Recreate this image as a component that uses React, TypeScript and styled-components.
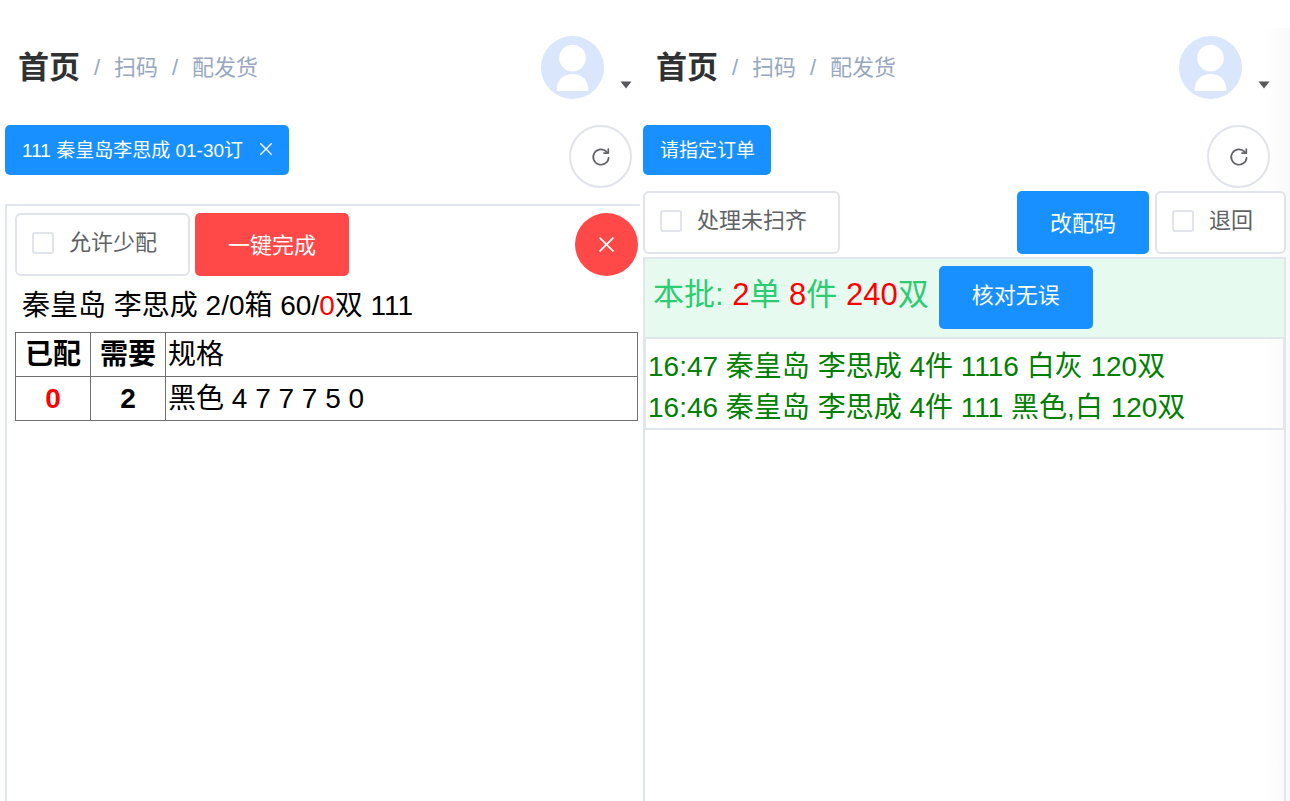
import React from "react";
import styled, { createGlobalStyle } from "styled-components";

const line = "#e1e6ed";
const controlLine = "#e2e4eb";
const blue = "#1890ff";
const red = "#ff4949";

const GlobalStyle = createGlobalStyle`
  * { box-sizing: border-box; }
  body {
    margin: 0;
    background: #fff;
    color: #000;
    font-family: "Liberation Sans", "Noto Sans CJK SC", sans-serif;
  }
  button { font: inherit; margin: 0; padding: 0; cursor: pointer; }
`;

const Page = styled.div`
  display: grid;
  grid-template-columns: 640fr 650fr;
  min-height: 100vh;
  padding-top: 28px;
  overflow: hidden;
`;

const Pane = styled.main<{ $shaded?: boolean }>`
  display: flex;
  flex-direction: column;
  min-width: 0;
  padding-left: ${(p) => (p.$shaded ? 3 : 5)}px;
  padding-right: ${(p) => (p.$shaded ? 4 : 0)}px;
  background: ${(p) =>
    p.$shaded
      ? "linear-gradient(to left, #f9f9f9, #ffffff 24px)"
      : "#fff"};
`;

const Header = styled.header<{ $end: number }>`
  display: flex;
  align-items: center;
  justify-content: space-between;
  height: 78px;
  padding: 0 ${(p) => p.$end}px 0 13px;
`;

const Crumbs = styled.nav`
  display: flex;
  align-items: center;
  padding-top: 2px;
  color: #97a8be;
  font-size: 22px;
  line-height: 32px;
`;

const Home = styled.a`
  color: #303133;
  font-size: 31px;
  font-weight: 700;
  text-decoration: none;
`;

const Crumb = styled.a`
  color: inherit;
  text-decoration: none;
`;

const Slash = styled.span`
  width: 34px;
  text-align: center;
`;

const UserMenu = styled.button`
  display: flex;
  align-items: flex-end;
  gap: 16px;
  border: 0;
  background: none;

  svg { display: block; }
  svg:last-child { margin-bottom: 10px; }
`;

const TabBar = styled.div<{ $end: number; $height: number }>`
  display: flex;
  align-items: flex-start;
  justify-content: space-between;
  height: ${(p) => p.$height}px;
  margin-top: 19px;
  padding-right: ${(p) => p.$end}px;
`;

const Tab = styled.div`
  display: flex;
  align-items: center;
  gap: 16px;
  height: 50px;
  padding: 0 16px 3px 17px;
  border-radius: 5px;
  background: ${blue};
  color: #fff;
  font-size: 19px;
  white-space: nowrap;
`;

const TabClose = styled.button`
  display: flex;
  border: 0;
  background: none;
  color: #fff;
`;

const RoundButton = styled.button<{ $danger?: boolean }>`
  display: flex;
  align-items: center;
  justify-content: center;
  width: 63px;
  height: 63px;
  border: ${(p) => (p.$danger ? "0" : `2px solid ${controlLine}`)};
  border-radius: 50%;
  background: ${(p) => (p.$danger ? red : "#fff")};
  color: ${(p) => (p.$danger ? "#fff" : "#606266")};
`;

const Actions = styled.div`
  display: flex;
  align-items: flex-start;
  gap: 5px;
`;

const Spacer = styled.div`
  flex: 1;
`;

const Button = styled.button<{ $danger?: boolean }>`
  height: 63px;
  padding: 0 33px 4px;
  border: 0;
  border-radius: 5px;
  background: ${(p) => (p.$danger ? red : blue)};
  color: #fff;
  font-size: 22px;
  white-space: nowrap;
`;

const CheckLabel = styled.label`
  display: flex;
  align-items: center;
  gap: 15px;
  height: 63px;
  padding: 0 31px 3px 15px;
  border: 2px solid ${controlLine};
  border-radius: 6px;
  background: #fff;
  color: #606266;
  font-size: 22px;
  line-height: 28px;
  white-space: nowrap;
`;

const CheckBox = styled.input`
  appearance: none;
  width: 22px;
  height: 22px;
  margin: 0;
  border: 2px solid ${controlLine};
  border-radius: 3px;
  background: #fff;

  &:checked { background: ${blue}; }
`;

const OrderPanel = styled.section`
  flex: 1;
  padding: 7px 2px 0 8px;
  border: solid ${line};
  border-width: 2px 0 0 2px;
`;

const OrderTitle = styled.p`
  margin: 10px 0 6px;
  padding-left: 7px;
  font-size: 28px;
  line-height: 40px;
`;

const SpecTable = styled.table`
  width: 100%;
  border-collapse: collapse;
  font-size: 28px;
  line-height: 41px;

  th, td {
    height: 44px;
    padding: 0 2px;
    border: 1px solid #707070;
    text-align: left;
    font-weight: 400;
  }
`;

const Count = styled.td`
  && {
    width: 75px;
    text-align: center;
    font-weight: 700;
  }
`;

const CountHead = styled.th`
  && {
    width: 75px;
    text-align: center;
    font-weight: 700;
  }
`;

const Red = styled.span`
  color: #f00;
`;

const Filters = styled(Actions)`
  align-items: flex-end;
  gap: 6px;
  margin-bottom: 3px;
`;

const BatchPanel = styled.section`
  flex: 1;
  border: solid ${line};
  border-width: 2px 2px 0;
`;

const BatchSummary = styled.div`
  display: flex;
  align-items: flex-start;
  gap: 10px;
  height: 78px;
  padding: 7px 0 0 8px;
  background: #e7faf0;
  color: #2dcc70;
  font-size: 31px;
  line-height: 58px;
  white-space: nowrap;

  ${Button} { line-height: 28px; }
`;

const Records = styled.ul`
  margin: 0;
  padding: 7px 0 0 2px;
  border: 2px solid ${line};
  border-width: 2px 1px;
  list-style: none;
  color: #008000;
  font-size: 28px;
  line-height: 41px;
`;

const CloseIcon = ({ size }: { size: number }) => (
  <svg width={size} height={size} viewBox="0 0 16 16" fill="none" stroke="currentColor" strokeWidth="1.6" strokeLinecap="round">
    <path d="M2 2l12 12M14 2L2 14" />
  </svg>
);

const RefreshIcon = () => (
  <svg width="20" height="20" viewBox="0 0 20 20" fill="none" stroke="currentColor" strokeWidth="1.7" strokeLinecap="round" strokeLinejoin="round">
    <path d="M17.600 10.800a7.700 7.700 0 1 1-2.100-6.100l1 1.100" />
    <path d="M17.300 2.200v3.900h-4.300" />
  </svg>
);

const Avatar = () => (
  <svg width="63" height="63" viewBox="0 0 63 63">
    <circle cx="31.5" cy="31.5" r="31.5" fill="#d9e6fb" />
    <circle cx="31.5" cy="22" r="13.3" fill="#fff" />
    <path d="M15.700 55v-1.800C15.700 44.500 22 38 31.500 38S47.300 44.500 47.300 53.200V55z" fill="#fff" />
  </svg>
);

const Caret = () => (
  <svg width="12" height="8" viewBox="0 0 12 8">
    <path d="M0.500 0.500h11L6 7.500z" fill="#56585c" />
  </svg>
);

const TopBar = ({ end }: { end: number }) => (
  <Header $end={end}>
    <Crumbs aria-label="导航">
      <Home href="#">首页</Home>
      <Slash>/</Slash>
      <Crumb href="#">扫码</Crumb>
      <Slash>/</Slash>
      <span>配发货</span>
    </Crumbs>
    <UserMenu aria-label="用户菜单">
      <Avatar />
      <Caret />
    </UserMenu>
  </Header>
);

const Check = ({ children }: { children: React.ReactNode }) => (
  <CheckLabel>
    <CheckBox type="checkbox" />
    {children}
  </CheckLabel>
);

const Refresh = () => (
  <RoundButton aria-label="刷新">
    <RefreshIcon />
  </RoundButton>
);

export default function App() {
  return (
    <>
      <GlobalStyle />
      <Page>
        <Pane>
          <TopBar end={8} />
          <TabBar $end={8} $height={79}>
            <Tab>
              111 秦皇岛李思成 01-30订
              <TabClose aria-label="关闭">
                <CloseIcon size={14} />
              </TabClose>
            </Tab>
            <Refresh />
          </TabBar>
          <OrderPanel>
            <Actions>
              <Check>允许少配</Check>
              <Button $danger>一键完成</Button>
              <Spacer />
              <RoundButton $danger aria-label="取消">
                <CloseIcon size={17} />
              </RoundButton>
            </Actions>
            <OrderTitle>
              秦皇岛 李思成 2/0箱 60/<Red>0</Red>双 111
            </OrderTitle>
            <SpecTable>
              <thead>
                <tr>
                  <CountHead>已配</CountHead>
                  <CountHead>需要</CountHead>
                  <th>规格</th>
                </tr>
              </thead>
              <tbody>
                <tr>
                  <Count><Red>0</Red></Count>
                  <Count>2</Count>
                  <td>黑色 4 7 7 7 5 0</td>
                </tr>
              </tbody>
            </SpecTable>
          </OrderPanel>
        </Pane>
        <Pane $shaded>
          <TopBar end={16} />
          <TabBar $end={16} $height={66}>
            <Tab>请指定订单</Tab>
            <Refresh />
          </TabBar>
          <Filters>
            <Check>处理未扫齐</Check>
            <Spacer />
            <Button>改配码</Button>
            <Check>退回</Check>
          </Filters>
          <BatchPanel>
            <BatchSummary>
              <span>
                本批: <Red>2</Red>单 <Red>8</Red>件 <Red>240</Red>双
              </span>
              <Button>核对无误</Button>
            </BatchSummary>
            <Records>
              <li>16:47 秦皇岛 李思成 4件 1116 白灰 120双</li>
              <li>16:46 秦皇岛 李思成 4件 111 黑色,白 120双</li>
            </Records>
          </BatchPanel>
        </Pane>
      </Page>
    </>
  );
}
